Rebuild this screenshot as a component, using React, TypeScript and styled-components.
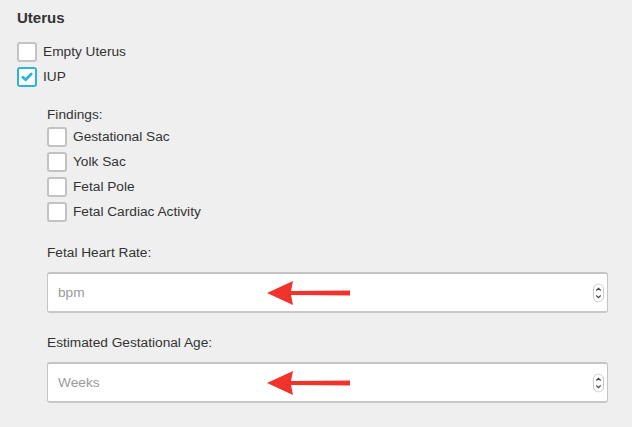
import styled, { createGlobalStyle } from 'styled-components';

const GlobalStyle = createGlobalStyle`
  body {
    margin: 0;
    background: #efefef;
    font-family: "Liberation Sans", Arial, sans-serif;
    color: #333;
  }
`;

const Page = styled.div`
  padding: 8px 24px 0 17px;
`;

const Title = styled.div`
  font-size: 15px;
  font-weight: bold;
  line-height: 20px;
  color: #333;
  margin-bottom: 11px;
`;

const Row = styled.label`
  display: flex;
  align-items: center;
  height: 25px;
  gap: 6px;
  font-size: 13.7px;
  color: #333;
`;

const Box = styled.span<{ $checked?: boolean }>`
  box-sizing: border-box;
  width: 20px;
  height: 20px;
  border: 2px solid ${(p) => (p.$checked ? '#2cb3e1' : '#c3c3c3')};
  border-radius: 3px;
  background: #fff;
  display: flex;
  align-items: center;
  justify-content: center;
`;

const Nested = styled.div`
  padding-left: 30px;
  display: flex;
  flex-direction: column;
`;

const Label = styled.div<{ $top: number }>`
  font-size: 13.7px;
  line-height: 18px;
  color: #333;
  margin-top: ${(p) => p.$top}px;
`;

const InputWrap = styled.div<{ $top: number }>`
  position: relative;
  margin-top: ${(p) => p.$top}px;
`;

const Input = styled.input`
  box-sizing: border-box;
  width: 100%;
  height: 41px;
  border: 1px solid #c4c4c4;
  border-top: 2px solid #c4c4c4;
  border-bottom: 2px solid #c8c8c8;
  border-radius: 3px;
  background: #fff;
  padding: 0 10px;
  font-family: "Liberation Sans", Arial, sans-serif;
  font-size: 13.7px;
  color: #333;
  outline: none;

  &::placeholder {
    color: #9a9a9a;
  }
`;

const Spinner = styled.svg`
  position: absolute;
  right: 4px;
  top: 50%;
  transform: translateY(-50%);
`;

const Arrow = styled.svg`
  position: absolute;
  left: 220px;
  top: 50%;
  transform: translateY(-50%);
`;

function Check({ label, checked }: { label: string; checked?: boolean }) {
  return (
    <Row>
      <Box $checked={checked}>
        {checked && (
          <svg width="12" height="10" viewBox="0 0 12 10">
            <path d="M1.8 5.2 L4.6 7.8 L10.2 2" fill="none" stroke="#2cb3e1" strokeWidth="2.8" strokeLinecap="round" strokeLinejoin="round" />
          </svg>
        )}
      </Box>
      {label}
    </Row>
  );
}

function NumberField({ placeholder, top }: { placeholder: string; top: number }) {
  return (
    <InputWrap $top={top}>
      <Input type="text" placeholder={placeholder} />
      <Arrow width="84" height="26" viewBox="0 0 84 26">
        <path d="M0 13 L26 1 L24 11 L83 10.5 L83 15.5 L24 15 L26 25 Z" fill="#f0332b" />
      </Arrow>
      <Spinner width="11" height="19" viewBox="0 0 11 19">
        <rect x="0.5" y="0.5" width="10" height="18" rx="5" fill="#fff" stroke="#c9c9c9" />
        <path d="M3.3 7 L5.5 4.8 L7.7 7" fill="none" stroke="#444" strokeWidth="1.1" />
        <path d="M3.3 12 L5.5 14.2 L7.7 12" fill="none" stroke="#444" strokeWidth="1.1" />
      </Spinner>
    </InputWrap>
  );
}

export default function App() {
  return (
    <>
      <GlobalStyle />
      <Page>
        <Title>Uterus</Title>
        <Check label="Empty Uterus" />
        <Check label="IUP" checked />
        <Nested>
          <Label $top={17}>Findings:</Label>
          <Check label="Gestational Sac" />
          <Check label="Yolk Sac" />
          <Check label="Fetal Pole" />
          <Check label="Fetal Cardiac Activity" />
          <Label $top={20}>Fetal Heart Rate:</Label>
          <NumberField placeholder="bpm" top={10} />
          <Label $top={21}>Estimated Gestational Age:</Label>
          <NumberField placeholder="Weeks" top={10} />
        </Nested>
      </Page>
    </>
  );
}
